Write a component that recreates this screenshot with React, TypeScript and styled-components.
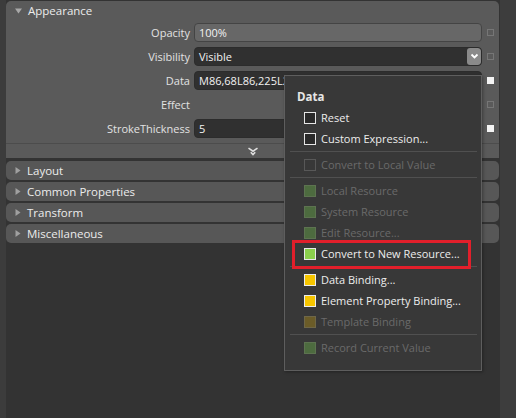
import styled, { createGlobalStyle, css } from "styled-components";

const GlobalStyle = createGlobalStyle`
    html, body {
        margin: 0;
        padding: 0;
        background: #333333;
        overflow: hidden;
    }
    body {
        font-family: "Open Sans", "Noto Sans", sans-serif;
    }
`;

const Frame = styled.div`
    position: relative;
    display: flex;
    width: 516px;
    height: 418px;
    background: #333333;
`;

const LeftRail = styled.div`
    width: 6px;
    background: #3c3c3c;
`;

const RightRail = styled.div`
    flex: 1;
    background: #3d3d3d;
`;

const Main = styled.div`
    width: 494px;
    display: flex;
    flex-direction: column;
    gap: 2px;
    padding-top: 1px;
    box-sizing: border-box;
`;

const Panel = styled.section`
    margin-right: 1px;
    margin-bottom: 1px;
    background: #5a5a5a;
    border-radius: 5px 5px 0 0;
`;

const Header = styled.div<{ $collapsed?: boolean }>`
    display: flex;
    align-items: center;
    gap: 6px;
    height: 19px;
    padding-left: 9px;
    font-size: 11.5px;
    color: #ececec;
    ${(p) =>
        p.$collapsed &&
        css`
            margin-right: 1px;
            background: #575757;
            border-radius: 5px;
        `}
`;

const Rows = styled.div`
    display: flex;
    flex-direction: column;
`;

const PropRow = styled.div`
    display: grid;
    grid-template-columns: 188px 288px 1fr;
    align-items: center;
    height: 24px;
`;

const Label = styled.div`
    text-align: right;
    padding-right: 4px;
    font-size: 11px;
    color: #e2e2e2;
`;

const Field = styled.div<{ $light?: boolean }>`
    position: relative;
    display: flex;
    align-items: center;
    height: 19px;
    box-sizing: border-box;
    padding-left: 4px;
    border-radius: 4px;
    font-size: 11px;
    color: #f2f2f2;
    white-space: nowrap;
    overflow: hidden;
    background: ${(p) => (p.$light ? "#676767" : "#303030")};
    border: 1px solid ${(p) => (p.$light ? "#444444" : "#2c2c2c")};
`;

const DropButton = styled.div`
    position: absolute;
    right: 0;
    top: 0;
    bottom: 0;
    width: 14px;
    display: flex;
    align-items: center;
    justify-content: center;
    background: #8a8a8a;
    border-radius: 3px;
`;

const Marker = styled.div<{ $set?: boolean }>`
    justify-self: center;
    width: 7px;
    height: 7px;
    box-sizing: border-box;
    border: 1px solid ${(p) => (p.$set ? "#f4f4f4" : "#767676")};
    background: ${(p) => (p.$set ? "#f4f4f4" : "transparent")};
`;

const ExpandRow = styled.div`
    display: flex;
    justify-content: center;
    align-items: center;
    height: 14px;
    margin-top: 3px;
    border-top: 1px solid #4c4c4c;
`;

const Menu = styled.div`
    position: absolute;
    left: 284px;
    top: 75px;
    width: 198px;
    height: 296px;
    box-sizing: border-box;
    padding: 9px 0 12px;
    background: #383838;
    border: 1px solid #5e5e5e;
    box-shadow: 1px 1px 3px rgba(0, 0, 0, 0.35);
    font-size: 11px;
`;

const MenuTitle = styled.div`
    height: 22px;
    display: flex;
    align-items: center;
    padding-left: 12px;
    font-weight: 700;
    font-size: 11.5px;
    color: #e6e6e6;
`;

const Item = styled.div<{ $disabled?: boolean; $marked?: boolean }>`
    position: relative;
    display: flex;
    align-items: center;
    gap: 5px;
    height: 21px;
    padding-left: 19px;
    color: ${(p) => (p.$disabled ? "#6a6a6a" : "#ededed")};
    white-space: nowrap;
    ${(p) =>
        p.$marked &&
        css`
            &::after {
                content: "";
                position: absolute;
                left: 7px;
                right: 10px;
                top: -3px;
                bottom: -5px;
                border: 3px solid #e21f2b;
            }
        `}
`;

type Tone = "plain" | "off" | "greenDim" | "green" | "yellow" | "olive";

const tones: Record<Tone, { bg: string; line: string }> = {
    plain: { bg: "#2a2a2a", line: "#e6e6e6" },
    off: { bg: "#383838", line: "#585858" },
    greenDim: { bg: "#4d6b3f", line: "#5d7350" },
    green: { bg: "#8bcf4c", line: "#e8e8e8" },
    yellow: { bg: "#f7c600", line: "#ececec" },
    olive: { bg: "#6b5c28", line: "#6f6748" },
};

const Box = styled.span<{ $tone: Tone }>`
    width: 12px;
    height: 12px;
    box-sizing: border-box;
    background: ${(p) => tones[p.$tone].bg};
    border: 1px solid ${(p) => tones[p.$tone].line};
`;

const Divider = styled.div`
    height: 1px;
    margin: 2px 4px 2px 5px;
    background: #505050;
`;

const DownTriangle = () => (
    <svg width="7" height="6" viewBox="0 0 7 6">
        <path d="M0 0.5 L7 0.5 L3.5 5.5 Z" fill="#a8a8a8" />
    </svg>
);

const RightTriangle = () => (
    <svg width="6" height="7" viewBox="0 0 6 7">
        <path d="M0.5 0 L5.5 3.5 L0.5 7 Z" fill="#a0a0a0" />
    </svg>
);

const Chevron = () => (
    <svg width="9" height="6" viewBox="0 0 9 6">
        <path d="M1.5 1.5 L4.5 4.5 L7.5 1.5" stroke="#ffffff" strokeWidth="1.8" fill="none" />
    </svg>
);

const DoubleChevron = () => (
    <svg width="12" height="9" viewBox="0 0 12 9">
        <path d="M1.5 1.2 L6 4.2 L10.5 1.2" stroke="#dedede" strokeWidth="1.6" fill="none" />
        <path d="M3.8 5.2 L6 7.6 L8.2 5.2" stroke="#dedede" strokeWidth="1.6" fill="none" />
    </svg>
);

const sections = ["Layout", "Common Properties", "Transform", "Miscellaneous"];

type Entry =
    | { label: string; tone: Tone; disabled?: boolean; marked?: boolean }
    | "sep";

const entries: Entry[] = [
    { label: "Reset", tone: "plain" },
    { label: "Custom Expression...", tone: "plain" },
    "sep",
    { label: "Convert to Local Value", tone: "off", disabled: true },
    "sep",
    { label: "Local Resource", tone: "greenDim", disabled: true },
    { label: "System Resource", tone: "greenDim", disabled: true },
    { label: "Edit Resource...", tone: "greenDim", disabled: true },
    { label: "Convert to New Resource...", tone: "green", marked: true },
    "sep",
    { label: "Data Binding...", tone: "yellow" },
    { label: "Element Property Binding...", tone: "yellow" },
    { label: "Template Binding", tone: "olive", disabled: true },
    "sep",
    { label: "Record Current Value", tone: "greenDim", disabled: true },
];

const App = () => {
    return (
        <Frame>
            <GlobalStyle />
            <LeftRail />
            <Main>
                <Panel>
                    <Header>
                        <DownTriangle />
                        Appearance
                    </Header>
                    <Rows>
                        <PropRow>
                            <Label>Opacity</Label>
                            <Field $light>100%</Field>
                            <Marker />
                        </PropRow>
                        <PropRow>
                            <Label>Visibility</Label>
                            <Field>
                                Visible
                                <DropButton>
                                    <Chevron />
                                </DropButton>
                            </Field>
                            <Marker />
                        </PropRow>
                        <PropRow>
                            <Label>Data</Label>
                            <Field>M86,68L86,225L230,225L230,68z</Field>
                            <Marker $set />
                        </PropRow>
                        <PropRow>
                            <Label>Effect</Label>
                            <div />
                            <Marker />
                        </PropRow>
                        <PropRow>
                            <Label>StrokeThickness</Label>
                            <Field>5</Field>
                            <Marker $set />
                        </PropRow>
                    </Rows>
                    <ExpandRow>
                        <DoubleChevron />
                    </ExpandRow>
                </Panel>
                {sections.map((s) => (
                    <Header key={s} $collapsed>
                        <RightTriangle />
                        {s}
                    </Header>
                ))}
            </Main>
            <RightRail />

            <Menu>
                <MenuTitle>Data</MenuTitle>
                {entries.map((e, i) =>
                    e === "sep" ? (
                        <Divider key={i} />
                    ) : (
                        <Item key={i} $disabled={e.disabled} $marked={e.marked}>
                            <Box $tone={e.tone} />
                            {e.label}
                        </Item>
                    )
                )}
            </Menu>
        </Frame>
    );
};

export default App;
